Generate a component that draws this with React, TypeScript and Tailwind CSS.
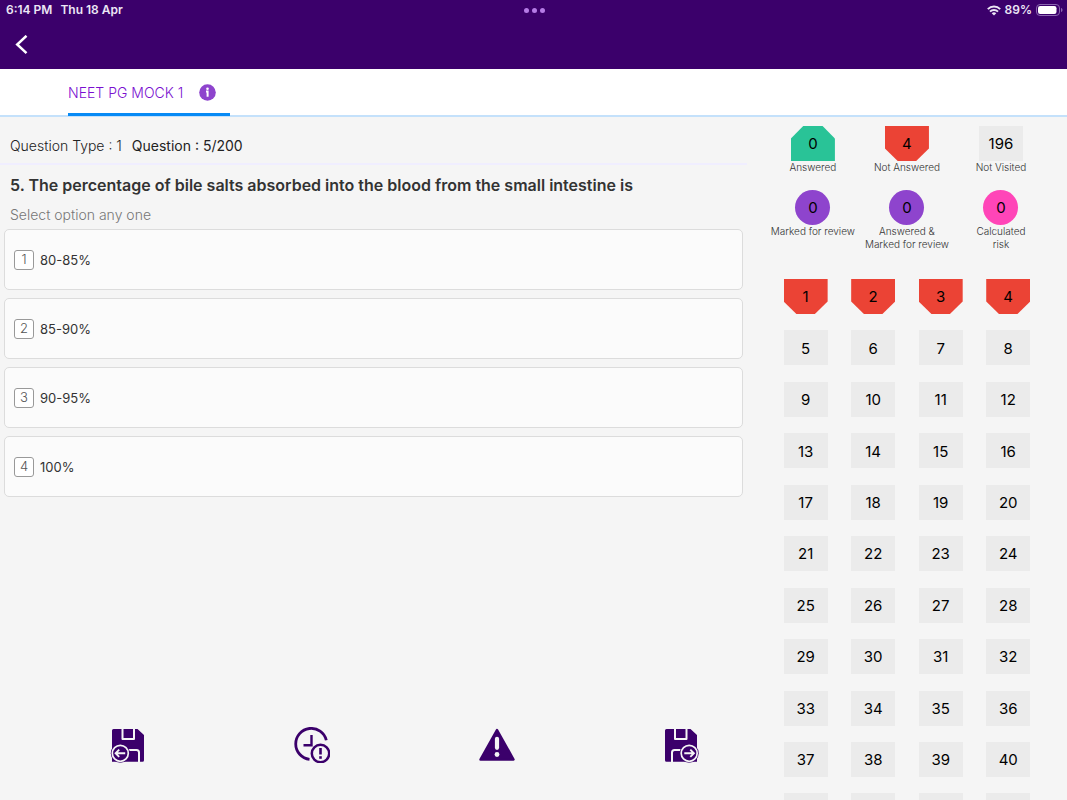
import { ReactNode } from 'react';
import clsx from 'clsx';

type Status = 'answered' | 'notAnswered' | 'notVisited' | 'marked' | 'risk';

const QUESTION_COUNT = 44;

const options = ['80-85%', '85-90%', '90-95%', '100%'];

const legend: { count: number; label: string; status: Status }[] = [
  { count: 0, label: 'Answered', status: 'answered' },
  { count: 4, label: 'Not Answered', status: 'notAnswered' },
  { count: 196, label: 'Not Visited', status: 'notVisited' },
  { count: 0, label: 'Marked for review', status: 'marked' },
  { count: 0, label: 'Answered &\nMarked for review', status: 'marked' },
  { count: 0, label: 'Calculated\nrisk', status: 'risk' },
];

const shapes: Record<Status, string> = {
  answered:
    'h-[35px] w-11 bg-[#29c397] [clip-path:polygon(28%_0,72%_0,100%_36%,100%_100%,0_100%,0_36%)]',
  notAnswered:
    'h-[35px] w-11 bg-[#eb4335] [clip-path:polygon(0_0,100%_0,100%_64%,71%_100%,29%_100%,0_64%)]',
  notVisited: 'h-[35px] w-11 bg-[#ebebeb]',
  marked: 'size-[35px] rounded-full bg-[#8e44cd]',
  risk: 'size-[35px] rounded-full bg-[#ff45b8]',
};

function Badge({ status, children }: { status: Status; children: ReactNode }) {
  return (
    <span
      className={clsx('flex items-center justify-center pt-0.5 text-[15px] text-black', shapes[status])}
    >
      {children}
    </span>
  );
}

function StatusBar() {
  return (
    <div className="grid h-5 grid-cols-3 items-center pr-1 pl-1.5 font-['Inter',sans-serif] text-[12px] font-semibold text-[#ece6f5]">
      <div className="flex gap-2">
        <span>6:14 PM</span>
        <span>Thu 18 Apr</span>
      </div>
      <div className="flex justify-center gap-[3px]">
        <span className="size-[5px] rounded-full bg-[#b57be6]" />
        <span className="size-[5px] rounded-full bg-[#b57be6]" />
        <span className="size-[5px] rounded-full bg-[#b57be6]" />
      </div>
      <div className="flex items-center justify-end gap-1">
        <svg width="14" height="11" viewBox="0 0 14 11" fill="none" stroke="currentColor" strokeWidth="2">
          <path d="M0.8 4.1a9 9 0 0 1 12.4 0" />
          <path d="M3 6.6a5.8 5.8 0 0 1 8 0" />
          <path d="M7 10.6 4.7 8.3a3.3 3.3 0 0 1 4.6 0z" fill="currentColor" stroke="none" />
        </svg>
        <span>89%</span>
        <svg width="27" height="12" viewBox="0 0 27 12" fill="none">
          <rect x="0.5" y="0.5" width="23" height="11" rx="3.5" stroke="#8b66b0" />
          <rect x="2" y="2" width="18.5" height="8" rx="2.2" fill="#fff" />
          <path d="M25 4v4c1-.3 1.5-1 1.5-2s-.5-1.700-1.500-2z" fill="#8b66b0" />
        </svg>
      </div>
    </div>
  );
}

function InfoIcon() {
  return (
    <svg width="17" height="17" viewBox="0 0 17 17">
      <circle cx="8.5" cy="8.5" r="8.3" fill="#8e44cd" />
      <circle cx="8.5" cy="4.7" r="1.3" fill="#fff" />
      <path d="M7 7.5h1.600v5.200" stroke="#fff" strokeWidth="2" fill="none" />
    </svg>
  );
}

function SaveIcon({ next = false }: { next?: boolean }) {
  return (
    <svg width="36" height="36" viewBox="0 0 36 36" fill="none">
      {next ? (
        <>
          <path d="M3.500 2h24l6.500 6v26.800H3.500A1.500 1.500 0 0 1 2 33.300V3.500A1.500 1.500 0 0 1 3.500 2z" fill="#3b006b" />
          <path d="M12 1v11h11.500V1" stroke="#f5f5f5" strokeWidth="2" strokeLinejoin="round" />
          <path d="M9 35V25.500a2.500 2.500 0 0 1 2.500-2.500h9" stroke="#f5f5f5" strokeWidth="2" />
          <circle cx="26.200" cy="26.300" r="9.500" fill="#3b006b" />
          <circle cx="26.200" cy="26.300" r="8" stroke="#f5f5f5" strokeWidth="1.700" />
          <path d="M21.300 26.300h9M27.300 22.700l3.600 3.600-3.600 3.600" stroke="#f5f5f5" strokeWidth="1.900" />
        </>
      ) : (
        <>
          <path d="M3.500 2h24l6.500 6v25.300a1.500 1.500 0 0 1-1.500 1.500H2V3.500A1.500 1.500 0 0 1 3.500 2z" fill="#3b006b" />
          <path d="M12.500 1v11H24V1" stroke="#f5f5f5" strokeWidth="2" strokeLinejoin="round" />
          <path d="M16 23h10.500a2.500 2.500 0 0 1 2.500 2.500V35" stroke="#f5f5f5" strokeWidth="2" />
          <circle cx="10.300" cy="26.300" r="9.500" fill="#3b006b" />
          <circle cx="10.300" cy="26.300" r="8" stroke="#f5f5f5" strokeWidth="1.700" />
          <path d="M15.200 26.300h-9M9.200 22.700l-3.600 3.600 3.600 3.600" stroke="#f5f5f5" strokeWidth="1.900" />
        </>
      )}
    </svg>
  );
}

function ReviewLaterIcon() {
  return (
    <svg width="36" height="36" viewBox="0 0 36 36" fill="none" stroke="#3b006b">
      <path d="M32.300 13.300A15.500 15.500 0 1 0 15.500 32.300" strokeWidth="2.800" />
      <path d="M17.500 8v10.200h-8" strokeWidth="2.400" />
      <circle cx="26.500" cy="26.500" r="8.700" strokeWidth="2.500" />
      <path d="M26.500 21v6.500" strokeWidth="2.600" />
      <path d="M26.500 29.200v2.600" strokeWidth="2.600" />
    </svg>
  );
}

function WarningIcon() {
  return (
    <svg width="36" height="36" viewBox="0 0 36 36">
      <path d="M18 3 34.500 32.500h-33z" fill="#3b006b" stroke="#3b006b" strokeWidth="2.500" strokeLinejoin="round" />
      <path d="M18 11.800v9" stroke="#f5f5f5" strokeWidth="4.200" strokeLinecap="round" />
      <circle cx="18" cy="27.500" r="2.400" fill="#f5f5f5" />
    </svg>
  );
}

function QuestionPanel() {
  return (
    <main className="flex w-[70%] flex-col">
      <div className="flex gap-2.5 border-b-2 border-[#f0eeff] px-2.5 pt-[19px] pb-[7px] text-[14px] leading-5 text-[#222]">
        <span className="font-light">Question Type : 1</span>
        <span>Question : 5/200</span>
      </div>
      <h1 className="px-2.5 pt-2 text-[16px] leading-6 font-semibold text-[#333]">
        5. The percentage of bile salts absorbed into the blood from the small intestine is
      </h1>
      <p className="px-2.5 pt-2 text-[14px] leading-5 font-light text-[#777]">Select option any one</p>
      <div className="flex flex-col gap-2 pt-1 pr-1 pl-1">
        {options.map((option, index) => (
          <button
            key={option}
            type="button"
            className="flex h-[61px] items-center gap-1.5 rounded-[5px] border border-[#dcdcdc] bg-[#fbfbfb] pl-[9px] text-left text-[13px] text-[#333]"
          >
            <span className="flex size-5 items-center justify-center rounded-[3px] border border-[#999] bg-white font-light text-[#555]">
              {index + 1}
            </span>
            <span className="pt-0.5">{option}</span>
          </button>
        ))}
      </div>
      <div className="mt-auto flex justify-between pr-12 pb-[37px] pl-[110px]">
        <button type="button" aria-label="Save and previous">
          <SaveIcon />
        </button>
        <button type="button" aria-label="Mark for review">
          <ReviewLaterIcon />
        </button>
        <button type="button" aria-label="Calculated risk">
          <WarningIcon />
        </button>
        <button type="button" aria-label="Save and next">
          <SaveIcon next />
        </button>
      </div>
    </main>
  );
}

function Palette() {
  return (
    <aside className="w-[30%] overflow-y-auto [scrollbar-width:none]">
      <ul className="grid grid-cols-3 px-[19px] pt-[9px]">
        {legend.map(({ count, label, status }) => (
          <li key={label} className="flex min-h-16 flex-col items-center">
            <Badge status={status}>{count}</Badge>
            <span className="text-center text-[10px] leading-[13px] font-light whitespace-pre-line text-[#333]">
              {label}
            </span>
          </li>
        ))}
      </ul>
      <div className="grid grid-cols-4 px-[25px] pt-[25px]">
        {Array.from({ length: QUESTION_COUNT }, (_, i) => i + 1).map((n) => (
          <button key={n} type="button" className="flex aspect-[21/16] justify-center">
            <Badge status={n <= 4 ? 'notAnswered' : 'notVisited'}>{n}</Badge>
          </button>
        ))}
      </div>
    </aside>
  );
}

export default function App() {
  return (
    <div className="flex h-screen flex-col bg-[#f5f5f5] font-['Inter',sans-serif]">
      <header className="bg-[#3b006b]">
        <StatusBar />
        <div className="flex h-[49px] items-center px-3.5">
          <button type="button" aria-label="Back">
            <svg width="14" height="20" viewBox="0 0 14 20" fill="none" stroke="#fff" strokeWidth="2.5">
              <path d="M12.500 0.800 3.200 9.500l9.300 8.700" />
            </svg>
          </button>
        </div>
      </header>
      <nav className="flex h-12 items-end border-b-2 border-[#c4e1fb] bg-white pl-[68px]">
        <button
          type="button"
          className="-mb-px flex h-full items-center gap-4 border-b-[3px] border-[#078af5] pt-0.5 pr-3.5 text-[14px] font-light text-[#7a0fd0]"
        >
          NEET PG MOCK 1
          <InfoIcon />
        </button>
      </nav>
      <div className="flex min-h-0 flex-1">
        <QuestionPanel />
        <Palette />
      </div>
    </div>
  );
}
